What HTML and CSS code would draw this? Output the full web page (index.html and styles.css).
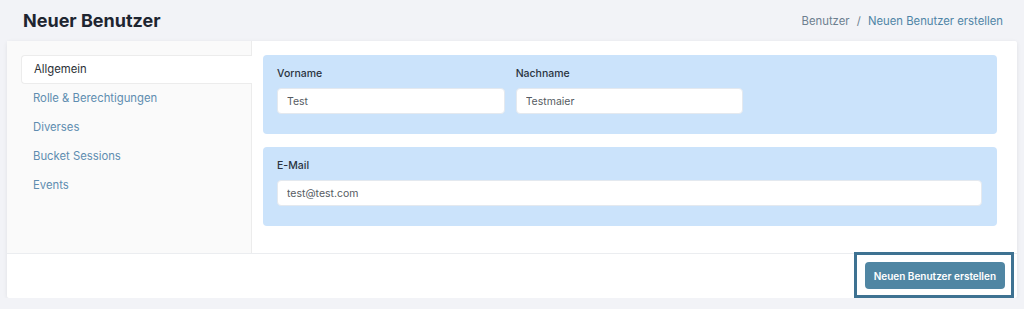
FILE: index.html
```html
<!DOCTYPE html>
<html lang="de">
<head>
    <meta charset="UTF-8">
    <title>Neuer Benutzer</title>
    <link rel="stylesheet" href="styles.css">
</head>
<body>
    <header class="page-head">
        <h1 class="page-title">Neuer Benutzer</h1>
        <nav class="crumbs">
            <span class="crumb">Benutzer</span>
            <span class="crumb-sep">/</span>
            <a class="crumb-link" href="#">Neuen Benutzer erstellen</a>
        </nav>
    </header>

    <div class="card">
        <div class="card-body">
            <ul class="tabs">
                <li class="tab active">Allgemein</li>
                <li class="tab">Rolle &amp; Berechtigungen</li>
                <li class="tab">Diverses</li>
                <li class="tab">Bucket Sessions</li>
                <li class="tab">Events</li>
            </ul>
            <div class="tab-content">
                <div class="panel">
                    <div class="field">
                        <label for="vorname">Vorname</label>
                        <input type="text" id="vorname" value="Test">
                    </div>
                    <div class="field">
                        <label for="nachname">Nachname</label>
                        <input type="text" id="nachname" value="Testmaier">
                    </div>
                </div>
                <div class="panel panel-single">
                    <div class="field">
                        <label for="email">E-Mail</label>
                        <input type="text" id="email" value="test@test.com">
                    </div>
                </div>
            </div>
        </div>
        <div class="card-foot">
            <div class="highlight">
                <button type="button" class="btn-primary">Neuen Benutzer erstellen</button>
            </div>
        </div>
    </div>
</body>
</html>
```

FILE: styles.css
```css
* {
    box-sizing: border-box;
}
html, body {
    margin: 0;
    padding: 0;
}
body {
    background-color: #f2f3f7;
    font-family: Inter, "Liberation Sans", sans-serif;
}
.page-head {
    height: 41px;
    display: flex;
    align-items: center;
    justify-content: space-between;
    padding: 0 21px 0 23px;
}
.page-title {
    margin: 0;
    font-size: 18px;
    font-weight: 700;
    color: #1e2530;
}
.crumbs {
    font-size: 11.3px;
    color: #6d7f8f;
}
.crumb-sep {
    margin: 0 4px;
}
.crumb-link {
    color: #4f85a6;
    text-decoration: none;
}
.card {
    margin: 0 7px;
    background-color: #fff;
    border-radius: 2px;
    box-shadow: 0 1px 4px rgba(0, 0, 0, 0.08);
}
.card-body {
    display: flex;
    border-bottom: 1px solid #ebedf0;
}
.tabs {
    list-style: none;
    margin: 0;
    width: 245px;
    padding: 14px 0 0 14px;
    background-color: #fafafa;
    border-right: 1px solid #ececec;
}
.tab {
    height: 29px;
    line-height: 29px;
    padding: 0 12px;
    font-size: 11.3px;
    color: #5e8db0;
}
.tab.active {
    background-color: #fff;
    color: #2b3036;
    border: 1px solid #ececec;
    border-right: none;
    border-radius: 4px 0 0 4px;
    margin-right: -1px;
    line-height: 27px;
}
.tab-content {
    flex: 1;
    padding: 14px 20px 27px 11px;
}
.panel {
    display: grid;
    grid-template-columns: repeat(3, 1fr);
    gap: 11px;
    background-color: #cbe3fb;
    border-radius: 4px;
    padding: 11px 15px 20px 14px;
}
.panel + .panel {
    margin-top: 13px;
}
.panel-single {
    grid-template-columns: 1fr;
}
.field label {
    display: block;
    font-size: 10.5px;
    font-weight: 500;
    line-height: 15px;
    color: #2a3340;
    margin-bottom: 7px;
}
.field input {
    display: block;
    width: 100%;
    height: 26px;
    margin: 0;
    padding: 0 9px;
    border: 1px solid #e4e9ef;
    border-radius: 4px;
    background-color: #fff;
    font-family: Inter, "Liberation Sans", sans-serif;
    font-size: 10.5px;
    color: #555b62;
}
.card-foot {
    height: 44px;
    display: flex;
    align-items: flex-start;
    justify-content: flex-end;
    padding: 0 3px 0 0;
}
.highlight {
    margin-top: -2px;
    padding: 7px 6px 6px 8px;
    border: 3px solid #3e7292;
}
.btn-primary {
    display: block;
    height: 27px;
    padding: 0 9px;
    border: none;
    border-radius: 4px;
    background-color: #5086a3;
    color: #fff;
    font-family: Inter, "Liberation Sans", sans-serif;
    font-size: 10px;
    font-weight: 600;
}
```
